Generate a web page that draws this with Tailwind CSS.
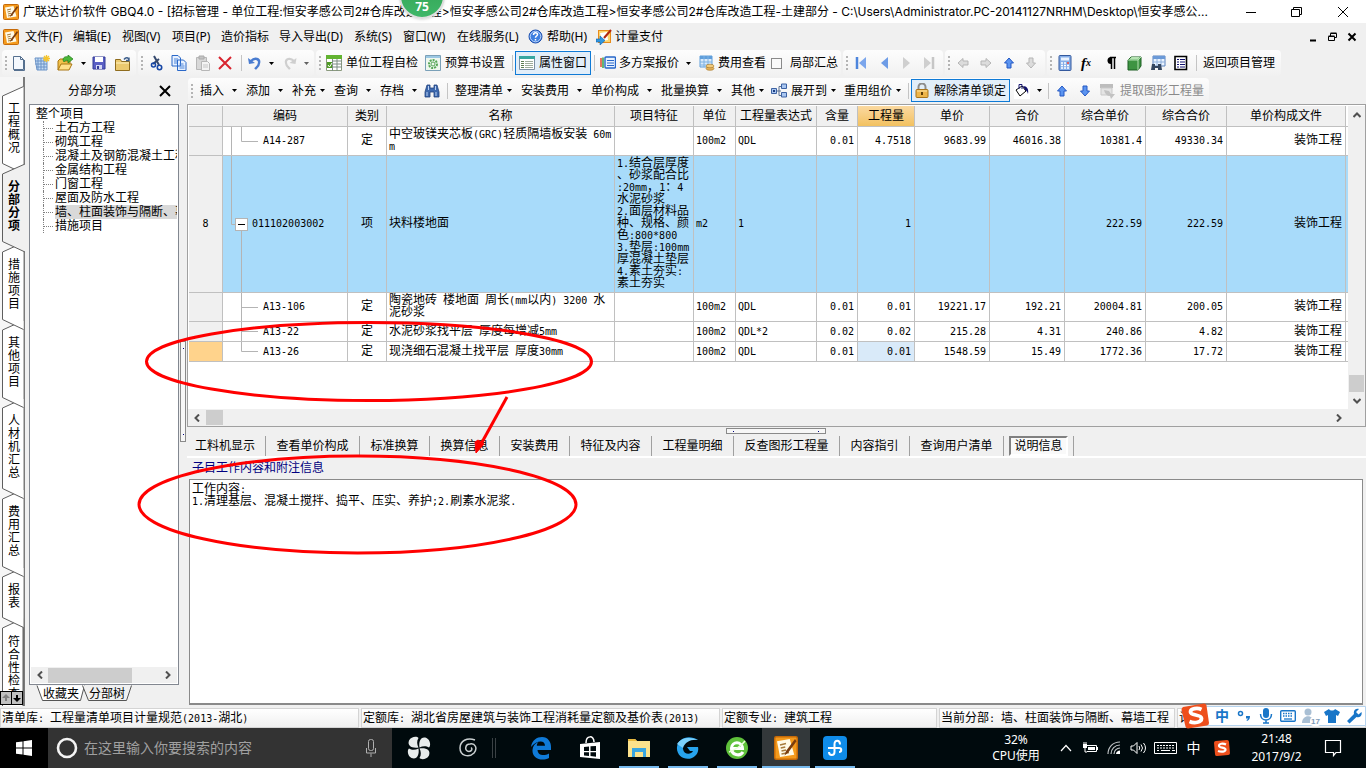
<!DOCTYPE html>
<html lang="zh-CN">
<head>
<meta charset="utf-8">
<title>广联达计价软件 GBQ4.0</title>
<script src="https://cdn.jsdelivr.net/npm/@tailwindcss/browser@4"></script>
</head>
<body class="relative flex h-screen flex-col overflow-hidden bg-[#f0f0f0] font-['Noto_Sans','Noto_Sans_CJK_SC',sans-serif] text-xs leading-4 text-black">

<!-- shared glyphs -->
<svg class="hidden" aria-hidden="true">
  <symbol id="caret" viewBox="0 0 5 3"><path d="M0 0h5L2.500 3z" fill="#000"/></symbol>
  <symbol id="grip" viewBox="0 0 3 16"><path d="M0 1h2v2H0zM0 5h2v2H0zM0 9h2v2H0zM0 13h2v2H0z" fill="#b4b4b4"/></symbol>
  <symbol id="up" viewBox="0 0 10 12"><path d="M5 1L9.500 6H7v5H3V6H.5z" fill="#5b94f0" stroke="#2458c4"/></symbol>
  <symbol id="down" viewBox="0 0 10 12"><path d="M5 11L9.500 6H7V1H3v5H.5z" fill="#5b94f0" stroke="#2458c4"/></symbol>
  <symbol id="app" viewBox="0 0 16 16"><rect x=".5" y=".5" width="15" height="15" rx="1" fill="#f49a1c" stroke="#c66a08"/><path d="M2 3.500l8.500-1.500 3 10.500L4 14z" fill="#fffbe8"/><path d="M4 6l4-1M4.500 8l3-.7M5 10l3-.7M5 12l5-1" stroke="#a77b3c"/><path d="M14 2L8 10l-1 3 2.500-2L15 3.500z" fill="#7b3d0e"/></symbol>
  <symbol id="chev" viewBox="0 0 8 8"><path d="M6 .5L2.500 4 6 7.500" fill="none" stroke="#505050" stroke-width="2"/></symbol>
</svg>

<!-- title bar -->
<header class="flex h-[23px] shrink-0 items-center bg-white pl-[3px]">
  <svg class="size-4 shrink-0"><use href="#app"/></svg>
  <h1 class="ml-1 min-w-0 grow whitespace-pre font-['Inter','Noto_Sans_CJK_SC',sans-serif] text-xs font-normal">广联达计价软件 GBQ4.0 - [招标管理 - 单位工程:恒安孝感公司2#仓库改造工程&gt;恒安孝感公司2#仓库改造工程&gt;恒安孝感公司2#仓库改造工程-土建部分 - C:\Users\Administrator.PC-20141127NRHM\Desktop\恒安孝感公...</h1>
  <button aria-label="最小化" class="flex w-[46px] shrink-0 justify-center"><svg class="h-3 w-3" viewBox="0 0 12 12"><path d="M1 6.500h10" stroke="#000"/></svg></button>
  <button aria-label="还原" class="flex w-[46px] shrink-0 justify-center"><svg class="h-3 w-3" viewBox="0 0 12 12"><path d="M.5 3.500h8v7h-8zM2.500 3.500v-2h8v7h-2" fill="none" stroke="#000"/></svg></button>
  <button aria-label="关闭" class="flex w-[46px] shrink-0 justify-center"><svg class="h-3 w-3" viewBox="0 0 12 12"><path d="M1 1l10 10M11 1L1 11" stroke="#000"/></svg></button>
</header>

<!-- menu bar -->
<nav class="flex h-[27px] shrink-0 items-center whitespace-nowrap pl-[3px]">
  <svg class="size-4 shrink-0"><use href="#app"/></svg>
  <button class="ml-1.5 w-12 text-left">文件(F)</button>
  <button class="w-[49px] text-left">编辑(E)</button>
  <button class="w-[50px] text-left">视图(V)</button>
  <button class="w-[49px] text-left">项目(P)</button>
  <button class="w-[58px] text-left">造价指标</button>
  <button class="w-[75px] text-left">导入导出(D)</button>
  <button class="w-[49px] text-left">系统(S)</button>
  <button class="w-[54px] text-left">窗口(W)</button>
  <button class="w-[71px] text-left">在线服务(L)</button>
  <button class="flex w-[68px] items-center gap-1"><svg class="size-[15px]" viewBox="0 0 15 15"><circle cx="7.500" cy="7.500" r="6.500" fill="#3d7fe0" stroke="#1d4fae"/><circle cx="7.500" cy="7.500" r="5.300" fill="none" stroke="#b9d3fa"/><path d="M5.500 6c0-3 4-3 4-.5 0 1.500-2 1.500-2 3.200M7.500 10v1.500" fill="none" stroke="#fff" stroke-width="1.500"/></svg>帮助(H)</button>
  <button class="flex items-center gap-[3px]"><svg class="size-4" viewBox="0 0 16 16"><rect x="2.500" y="1.500" width="12" height="12" fill="#fbd46e" stroke="#e88b1a"/><path d="M4 4l7-1 1 8-6 1z" fill="#fff"/><path d="M15 1L8 9" stroke="#b2280f" stroke-width="2"/><path d="M0 10h4V7l5 4.500L4 16v-3H0z" fill="#2f96e0" stroke="#0e62ab" stroke-width=".6"/></svg>计量支付</button>
  <div class="grow"></div>
  <button aria-label="最小化文档" class="w-[19px]"><svg class="size-2.5" viewBox="0 0 10 10"><path d="M1 8.500h6" stroke="#000" stroke-width="2"/></svg></button>
  <button aria-label="还原文档" class="w-[19px]"><svg class="size-2.5" viewBox="0 0 10 10"><path d="M.5 4.500h6v4h-6zM2.500 4V1.500h6v4H7M.5 4h6M2.500 1h6" fill="none" stroke="#000"/></svg></button>
  <button aria-label="关闭文档" class="w-[19px]"><svg class="size-2.5" viewBox="0 0 10 10"><path d="M1.500 1.500l7 7M8.500 1.500l-7 7" stroke="#000" stroke-width="2"/></svg></button>
</nav>

<!-- main toolbar -->
<div role="toolbar" class="flex h-[27px] shrink-0 gap-0.5 whitespace-nowrap pb-px pl-0.5 [&>div]:flex [&>div]:shrink-0 [&>div]:items-center [&>div]:rounded-sm [&>div]:bg-linear-to-b [&>div]:from-[#fdfdfd] [&>div]:to-[#f1f1f1] [&_button]:flex [&_button]:shrink-0 [&_button]:items-center [&_svg]:shrink-0">
  <div>
    <span class="w-2.5 pl-[3px]"><svg class="h-4 w-[3px]"><use href="#grip"/></svg></span>
    <button aria-label="新建" class="w-[22px]"><svg class="h-4 w-3.5" viewBox="0 0 14 16"><path d="M1.500 1.500h7l3 3v10h-10z" fill="#f4f8fd" stroke="#56708f"/><path d="M8.500 1.500v3h3M12.500 5v10.500H2" fill="none" stroke="#56708f"/></svg></button>
    <button aria-label="新建项目" class="w-[23px]"><svg class="size-4" viewBox="0 0 16 16"><path d="M1 3h12v12H3z" fill="#c5dcf5" stroke="#6b93c7"/><path d="M4 3v12M7 3v12M10 3v12M1 6h12M1 9h12M2 12h11" stroke="#6b93c7"/><path d="M12.500 0v7M9 3.500h7M10 1l5 5M15 1l-5 5" stroke="#f6c52c" stroke-width="1.300"/></svg></button>
    <button aria-label="打开" class="w-[23px]"><svg class="size-4" viewBox="0 0 16 16"><path d="M1 15V6l2-2h4l1 2h5v3" fill="#f2c14a" stroke="#a97612"/><path d="M1 15l3-6h11l-3 6z" fill="#ffe08a" stroke="#a97612"/><path d="M6 5c0-3 3-4 5-3V0l5 4-5 4V5.500C9 5 8 6 7 7z" fill="#4cb83a" stroke="#1f7d19" stroke-width=".7"/></svg></button>
    <button aria-label="打开列表" class="w-3 pl-px"><svg class="h-[3px] w-[5px]"><use href="#caret"/></svg></button>
    <button aria-label="保存" class="w-[23px]"><svg class="size-3.5" viewBox="0 0 14 14"><path d="M1 1h12v12H1z" fill="#5a5fc4" stroke="#333a97"/><path d="M3 1h8v5H3z" fill="#fff"/><path d="M4 9h6v4H4z" fill="#d5d8f5"/><path d="M5 10h2v3H5z" fill="#333a97"/></svg></button>
    <button aria-label="目录" class="w-[21px]"><svg class="h-[15px] w-4" viewBox="0 0 16 15"><path d="M.5 3.500h5l1 2h8v9H.5z" fill="#ecca6f" stroke="#8f6c1e"/><path d="M9 3.500c2-3 5-2 5 1m0-3v3h-3" fill="none" stroke="#3e5f8c" stroke-width="1.400"/><path d="M1 7h13" stroke="#fff2c0"/></svg></button>
  </div>
  <div>
    <span class="w-3 pl-[3px]"><svg class="h-4 w-[3px]"><use href="#grip"/></svg></span>
    <button aria-label="剪切" class="w-[21px]"><svg class="h-4 w-3.5" viewBox="0 0 14 16"><path d="M4 1l5 9M9 4L3 9" stroke="#35496e" stroke-width="2"/><circle cx="3.500" cy="10" r="2" fill="none" stroke="#1747a6" stroke-width="1.600"/><circle cx="9.500" cy="12.500" r="2.200" fill="none" stroke="#1747a6" stroke-width="1.600"/></svg></button>
    <button aria-label="复制" class="w-6"><svg class="size-4" viewBox="0 0 16 16"><path d="M1 .5h6l2.500 2.500v8H1zM6.500 5h6L15 7.500V15.500H6.500z" fill="#e7f1ff" stroke="#2a68c8"/><path d="M3 4h4M3 6h3M3 8h3M8.500 9h4M8.500 11h5M8.500 13h5" stroke="#4c85d9"/></svg></button>
    <button aria-label="粘贴" class="w-[23px]"><svg class="size-4" viewBox="0 0 16 16"><path d="M1.500 2.500h10v12h-10z" fill="#d8d8d8" stroke="#b7b7b7"/><path d="M4 1h5v3H4z" fill="#c4c4c4" stroke="#aaa"/><path d="M6.500 6.500h6l2 2v7h-8z" fill="#f4f4f4" stroke="#b7b7b7"/><path d="M8 10h5M8 12h5" stroke="#c6c6c6"/></svg></button>
    <button aria-label="删除" class="w-5"><svg class="size-3.5" viewBox="0 0 14 14"><path d="M1 1l12 12M13 1L1 13" stroke="#d8242f" stroke-width="2"/></svg></button>
    <span class="h-4 w-2.5"><i class="ml-[3px] block h-4 w-px bg-[#c4c4c4]"></i></span>
    <button aria-label="撤销" class="w-5"><svg class="size-3.5" viewBox="0 0 14 14"><path d="M3 5c4-4 9-2 8 2 0 3-2 4-4 6" fill="none" stroke="#4a7cd0" stroke-width="2.400"/><path d="M0 2l1 6 6-1z" fill="#4a7cd0"/></svg></button>
    <button aria-label="撤销列表" class="w-[15px] pl-px"><svg class="h-[3px] w-[5px]"><use href="#caret"/></svg></button>
    <button aria-label="重做" class="w-5"><svg class="size-3.5" viewBox="0 0 14 14"><path d="M11 5C7 1 2 3 3 7c0 3 2 4 4 6" fill="none" stroke="#cfcfcf" stroke-width="2.200"/><path d="M13.500 2l-1 6-6-1z" fill="#cfcfcf"/></svg></button>
    <button aria-label="重做列表" class="w-[11px] pl-px opacity-60"><svg class="h-[3px] w-[5px]"><use href="#caret"/></svg></button>
  </div>
  <div>
    <span class="w-2.5 pl-[3px]"><svg class="h-4 w-[3px]"><use href="#grip"/></svg></span>
    <button class="w-[99px] gap-1"><svg class="size-4" viewBox="0 0 16 16"><path d="M.5.5h15v15H.5z" fill="#fff" stroke="#8b9a7e"/><path d="M0 0h16v4H0z" fill="#62b331"/><path d="M7 6h9M7 9h9M7 12h9M6.500 4v12M11 4v12" stroke="#7d8c84"/><path d="M1 7h5v6H1z" fill="#4e9b24"/><path d="M2 10l1.500 2L6 8" fill="none" stroke="#fff"/></svg>单位工程自检</button>
    <button class="w-[84px] gap-1"><svg class="size-4" viewBox="0 0 16 16"><path d="M.5.5h15v15H.5z" fill="#eef7ee" stroke="#7aa0b8"/><path d="M1 1h14v2H1z" fill="#9cc8e4"/><circle cx="8" cy="9" r="4" fill="none" stroke="#55a656" stroke-width="2" stroke-dasharray="2 1"/><circle cx="8" cy="9" r="2" fill="none" stroke="#55a656"/></svg>预算书设置</button>
    <span class="h-4 w-1.5"><i class="ml-[3px] block h-4 w-px bg-[#c4c4c4]"></i></span>
    <button aria-pressed="true" class="h-6 w-[76px] gap-1 border border-[#0f7ad6] bg-[#e2eef9] pl-[3px]"><svg class="size-4" viewBox="0 0 16 16"><path d="M.5 1.500h15v13H.5z" fill="#fff" stroke="#7c8fa3"/><path d="M0 1h16v3H0z" fill="#38a6a0"/><path d="M2 6.500h3M2 8.500h3M2 10.500h3M2 12.500h3" stroke="#5f7c54"/><path d="M6 6.500h8M6 8.500h8M6 10.500h8M6 12.500h8" stroke="#9dab9b"/></svg>属性窗口</button>
    <span class="h-4 w-[9px]"><i class="ml-[3px] block h-4 w-px bg-[#c4c4c4]"></i></span>
    <button class="w-[99px]"><svg class="mr-[3px] size-4" viewBox="0 0 16 16"><path d="M1 3v9" stroke="#e04b2f" stroke-width="1.500"/><path d="M3 2.500v10.500" stroke="#35a048" stroke-width="1.500"/><rect x="5" y="2" width="10.500" height="11" rx="1" fill="#eaf3ff" stroke="#2767c9" stroke-width="1.400"/><path d="M7 5.500h7M7 8h7M7 10.500h7" stroke="#2767c9"/></svg>多方案报价<svg class="ml-[7px] h-[3px] w-[5px]"><use href="#caret"/></svg></button>
    <button class="w-[72px] gap-[3px]"><svg class="size-4" viewBox="0 0 16 16"><path d="M1 1h12v11H1z" fill="#d9eafb" stroke="#5f9edb"/><path d="M1 1h12v3H1z" fill="#5f9edb"/><path d="M5 1v11M9 1v11M1 7h12M1 10h12" stroke="#7db1e3"/><ellipse cx="11" cy="13.500" rx="4" ry="1.800" fill="#e3b15b" stroke="#a6731f" stroke-width=".6"/><ellipse cx="11" cy="11" rx="4" ry="1.800" fill="#f2cb7e" stroke="#a6731f" stroke-width=".6"/></svg>费用查看</button>
    <label class="flex w-[70px] items-center gap-2"><input type="checkbox" class="m-0 size-[11px] appearance-none border border-[#8a8a8a] bg-[#fafafa]">局部汇总</label>
  </div>
  <div>
    <span class="w-3 pl-[3px]"><svg class="h-4 w-[3px]"><use href="#grip"/></svg></span>
    <button aria-label="首项" class="w-[25px]"><svg class="h-3 w-[11px]" viewBox="0 0 11 12"><path d="M2 0v12" stroke="#4d85dc" stroke-width="2.500"/><path d="M11 0v12L4 6z" fill="#7ba6ec"/></svg></button>
    <button aria-label="上一项" class="w-[22px]"><svg class="h-3 w-[11px]" viewBox="0 0 11 12"><path d="M8 0v12L1 6z" fill="#6e9ce6"/></svg></button>
    <button aria-label="下一项" class="w-[22px]"><svg class="h-3 w-[11px]" viewBox="0 0 11 12"><path d="M1 0v12l7-6z" fill="#cfcfcf"/></svg></button>
    <button aria-label="末项" class="w-[19px]"><svg class="h-3 w-[11px]" viewBox="0 0 11 12"><path d="M9 0v12" stroke="#c6c6c6" stroke-width="2.500"/><path d="M0 0v12l7-6z" fill="#cfcfcf"/></svg></button>
  </div>
  <div>
    <span class="w-3 pl-[3px]"><svg class="h-4 w-[3px]"><use href="#grip"/></svg></span>
    <button aria-label="升级" class="w-[23px]"><svg class="h-2.5 w-3" viewBox="0 0 12 10"><path d="M1 5l5-4.500V3h5v4H6v2.500z" fill="#dcdcdc" stroke="#b5b5b5"/></svg></button>
    <button aria-label="降级" class="w-6"><svg class="h-2.5 w-3" viewBox="0 0 12 10"><path d="M11 5L6 .5V3H1v4h5v2.500z" fill="#dcdcdc" stroke="#b5b5b5"/></svg></button>
    <button aria-label="上移" class="w-[22px]"><svg class="h-3 w-2.5"><use href="#up"/></svg></button>
    <button aria-label="下移" class="w-[19px]"><svg class="h-3 w-2.5" viewBox="0 0 10 12"><path d="M5 11L9.500 6H7V1H3v5H.5z" fill="#dcdcdc" stroke="#b5b5b5"/></svg></button>
  </div>
  <div>
    <span class="w-[11px] pl-[3px]"><svg class="h-4 w-[3px]"><use href="#grip"/></svg></span>
    <button aria-label="计算器" class="w-[23px]"><svg class="h-4 w-3.5" viewBox="0 0 14 16"><rect x="1" y=".5" width="12" height="15" rx="1" fill="#86aee8" stroke="#34599d"/><path d="M3 2.500h8v3H3z" fill="#eaf3ff"/><path d="M3 8h8M3 10.500h8M3 13h8" stroke="#fff" stroke-width="1.500" stroke-dasharray="2 1"/><path d="M9 8h2" stroke="#d33" stroke-width="1.500"/></svg></button>
    <button aria-label="函数" class="w-6 font-['Liberation_Serif'] text-[15px] font-bold italic">f<span class="text-[10px]">x</span></button>
    <button aria-label="段落" class="w-[22px]"><svg class="h-3.5 w-3" viewBox="0 0 12 14"><path d="M5 1.500h6M6.500 1v12M9.500 1v12" stroke="#000" stroke-width="1.500"/><path d="M6 1a3.500 3.500 0 000 7z" fill="#000"/></svg></button>
    <button aria-label="模型" class="w-[23px]"><svg class="size-[15px]" viewBox="0 0 15 15"><path d="M1 4l3-3h10v9l-3 4H1z" fill="#3d9442" stroke="#1c5e22"/><path d="M1 4h10v10M11 4l3-3" fill="none" stroke="#b6e3b3"/><path d="M2 3.500L4.500 1H13l-2 2.500z" fill="#b6e3b3"/></svg></button>
    <button aria-label="查找表" class="w-6"><svg class="size-4" viewBox="0 0 16 16"><path d="M3 1h12v10H3z" fill="#e9f3ff" stroke="#5a82bd"/><path d="M3 1h12v3H3z" fill="#6b9ad8"/><path d="M7 4v6M11 4v6M3 7h12" stroke="#8fb0dc"/><path d="M2 9h3v2h3V9h3l1 6H8v-2H5v2H1z" fill="#34465f"/></svg></button>
    <button aria-label="列表" class="w-[18px]"><svg class="h-4 w-3.5" viewBox="0 0 14 16"><path d="M1 1.500h11.500v13H1z" fill="#fff" stroke="#000" stroke-width="1.600"/><path d="M3 4.500h2M3 7h2M3 9.500h2M3 12h2M6 4.500h5M6 7h5M6 9.500h5M6 12h5" stroke="#10106f" stroke-width="1.200"/></svg></button>
    <span class="h-4 w-[11px]"><i class="ml-1 block h-4 w-px bg-[#c4c4c4]"></i></span>
    <button class="w-[78px]">返回项目管理</button>
  </div>
</div>

<!-- workspace -->
<main class="flex min-h-0 grow">

  <!-- vertical page tabs -->
  <nav class="relative w-[25px] shrink-0 overflow-hidden bg-[#f6f6f6]">
    <svg class="absolute left-0 top-0 h-[629px] w-[25px]" viewBox="0 0 25 629">
      <path d="M24 0v87M24 174v455" stroke="#7a7a7a" stroke-width="2"/>
      <g fill="#fff" stroke="#5e5e5e">
        <path d="M23 629V541.500L2.500 551v78"/>
        <path d="M23.500 490.500L2.500 500v40.500l21 10"/>
        <path d="M23.500 412.500L2.500 422v67.500l21 10"/>
        <path d="M23.500 321.500L2.500 331v80.500l21 10"/>
        <path d="M23.500 243.500L2.500 253v67.500l21 10"/>
        <path d="M23.500 165.500L2.500 175v67.500l21 10"/>
        <path d="M23.500 9.500L2.500 19v67.500l21 10"/>
      </g>
      <path d="M25 87L2.500 97v67.500L25 175" fill="#f0f0f0" stroke="#5e5e5e"/>
    </svg>
    <div class="relative flex flex-col gap-[26px] pl-[7px] pt-[25px] leading-[13px] [&>button]:w-3.5 [&>button]:wrap-anywhere">
      <button>工程概况</button>
      <button class="font-bold">分部分项</button>
      <button>措施项目</button>
      <button>其他项目</button>
      <button>人材机汇总</button>
      <button>费用汇总</button>
      <button>报表</button>
      <button>符合性检查</button>
    </div>
    <div class="absolute bottom-px left-0 flex h-3.5 w-[23px] border border-black">
      <button aria-label="上滚" class="flex w-2.5 items-center justify-center bg-[#c0c0c0]"><svg class="size-2" viewBox="0 0 8 8"><path d="M4 0l4 4H5v3H3V4H0z" fill="#808080"/></svg></button>
      <button aria-label="下滚" class="flex grow items-center justify-center border-l border-black bg-[#c0c0c0]"><svg class="size-2" viewBox="0 0 8 8"><path d="M4 8l4-4H5V1H3v3H0z" fill="#000"/></svg></button>
    </div>
  </nav>

  <!-- section tree -->
  <aside class="ml-1 flex w-[150px] shrink-0 flex-col">
    <div class="flex h-[27px] items-center pl-[39px]">
      <h2 class="w-[91px] text-xs font-normal">分部分项</h2>
      <button aria-label="关闭面板"><svg class="size-3" viewBox="0 0 12 12"><path d="M1 1l10 10M11 1L1 11" stroke="#000" stroke-width="2"/></svg></button>
    </div>
    <div class="flex min-h-0 grow flex-col border border-[#828790] bg-white p-px">
      <div class="grow overflow-hidden whitespace-nowrap pl-[5px] pt-px leading-[14px]">
        <div>整个项目</div>
        <ul class="ml-[7px] [&>li]:flex [&>li]:h-3.5 [&>li]:items-center [&_i]:mr-0.5 [&_i]:h-px [&_i]:w-[9px] [&_i]:border-t [&_i]:border-dotted [&_i]:border-[#808080] [&>li]:border-l [&>li]:border-dotted [&>li]:border-[#808080] [&_i]:shrink-0">
          <li><i></i>土石方工程</li>
          <li><i></i>砌筑工程</li>
          <li><i></i>混凝土及钢筋混凝土工程</li>
          <li><i></i>金属结构工程</li>
          <li><i></i>门窗工程</li>
          <li><i></i>屋面及防水工程</li>
          <li><i></i><span class="bg-[#d9d9d9]">墙、柱面装饰与隔断、幕墙工程</span></li>
          <li><i></i>措施项目</li>
        </ul>
      </div>
      <div class="flex h-4 shrink-0 items-center bg-[#f0f0f0]">
        <button aria-label="向左" class="flex w-[17px] justify-center"><svg class="size-2"><use href="#chev"/></svg></button>
        <div class="h-[15px] w-[84px] bg-[#cdcdcd]"></div>
        <div class="grow"></div>
        <button aria-label="向右" class="flex w-[17px] rotate-180 justify-center"><svg class="size-2"><use href="#chev"/></svg></button>
      </div>
    </div>
    <div class="relative h-[21px] shrink-0">
      <svg class="absolute left-0 top-0 h-5 w-[110px]" viewBox="0 0 110 20"><path d="M8 .5l5.500 15h38l4-15" fill="#fff" stroke="#555"/><path d="M53.500.5l6 15h38l5-15" fill="#f0f0f0" stroke="#555"/></svg>
      <div class="relative flex gap-2.5 pl-3.5 pt-px"><button>收藏夹</button><button>分部树</button></div>
    </div>
  </aside>

  <!-- vertical splitter -->
  <div class="flex w-2 shrink-0 items-end pb-[264px] pl-px"><div class="flex h-[101px] w-[6px] flex-col justify-between border border-[#8a8a8a] bg-[#f7f7f7] py-1.5 pl-0.5"><i class="size-px bg-[#000080]"></i><i class="size-px bg-[#000080]"></i></div></div>

  <section class="flex min-w-0 grow flex-col">
    <!-- editing toolbar -->
    <div role="toolbar" class="flex h-[27px] shrink-0 whitespace-nowrap pb-px pl-px pt-px">
     <div class="flex shrink-0 items-center rounded-sm bg-linear-to-b from-[#fdfdfd] to-[#f1f1f1] [&_svg]:shrink-0 [&>button]:flex [&>button]:shrink-0 [&>button]:items-center">
      <span class="w-3 pl-[3px]"><svg class="h-4 w-[3px]"><use href="#grip"/></svg></span>
      <button class="w-[46px] gap-2">插入<svg class="h-[3px] w-[5px]"><use href="#caret"/></svg></button>
      <button class="w-[46px] gap-2">添加<svg class="h-[3px] w-[5px]"><use href="#caret"/></svg></button>
      <button class="w-[42px] gap-1">补充<svg class="h-[3px] w-[5px]"><use href="#caret"/></svg></button>
      <button class="w-[46px] gap-2">查询<svg class="h-[3px] w-[5px]"><use href="#caret"/></svg></button>
      <button class="w-11 gap-2">存档<svg class="h-[3px] w-[5px]"><use href="#caret"/></svg></button>
      <button aria-label="查找" class="w-5"><svg class="h-3.5 w-4" viewBox="0 0 16 14"><path d="M3 1h3v3h4V1h3l2 7v5h-5V8H6v5H1V8z" fill="#3d68ad" stroke="#22437e" stroke-width=".8"/><path d="M3 8v4M12 8v4M4.500 2v4M11.500 2v4" stroke="#b9d0f3"/></svg></button>
      <span class="h-4 w-[11px]"><i class="ml-[3px] block h-4 w-px bg-[#c4c4c4]"></i></span>
      <button class="w-[66px] gap-1">整理清单<svg class="h-[3px] w-[5px]"><use href="#caret"/></svg></button>
      <button class="w-[70px] gap-2">安装费用<svg class="h-[3px] w-[5px]"><use href="#caret"/></svg></button>
      <button class="w-[70px] gap-2">单价构成<svg class="h-[3px] w-[5px]"><use href="#caret"/></svg></button>
      <button class="w-[70px] gap-2">批量换算<svg class="h-[3px] w-[5px]"><use href="#caret"/></svg></button>
      <button class="w-10 gap-1">其他<svg class="h-[3px] w-[5px]"><use href="#caret"/></svg></button>
      <button class="w-[73px] gap-1"><svg class="h-4 w-4" viewBox="0 0 16 16"><path d="M6 8h4M8 3.500v9M8 3.500h2M8 12.500h2" fill="none" stroke="#5c7191"/><path d="M.5 5.500h5v5h-5zM10.500 1h5v4.500h-5zM10.500 9.500h5V14h-5z" fill="#a9c6f0" stroke="#3d62a3"/><path d="M2 7l2 2M4 7L2 9" stroke="#1d3f82"/></svg>展开到<svg class="h-[3px] w-[5px]"><use href="#caret"/></svg></button>
      <button class="w-[60px] gap-1">重用组价<svg class="h-[3px] w-[5px]"><use href="#caret"/></svg></button>
      <span class="h-4 w-[7px]"><i class="ml-1 block h-4 w-px bg-[#c4c4c4]"></i></span>
      <button aria-pressed="true" class="h-[23px] w-[99px] gap-[5px] border border-[#0f7ad6] bg-[#e2eef9] pl-[3px]"><svg class="h-[15px] w-3.5" viewBox="0 0 14 15"><path d="M3.500 7V4a3.500 3.500 0 017 0v3" fill="none" stroke="#8d8d8d" stroke-width="2"/><rect x="1" y="6.500" width="12" height="8" rx="1" fill="#edb54a" stroke="#a8741b"/><path d="M2 8h10" stroke="#fbe3a4"/><path d="M7 9v3" stroke="#5e3e08" stroke-width="2"/></svg>解除清单锁定</button>
      <button aria-label="填充色" class="ml-1 w-[31px] gap-[7px]"><svg class="size-4" viewBox="0 0 16 16"><path d="M0 0h16v16H0z" fill="#fff"/><path d="M2 7l6-4 4 5-6 5z" fill="#fff" stroke="#000"/><path d="M5 6V1.500h3V6" fill="none" stroke="#1a1a75"/><path d="M9 3c4 0 6 3 5 8-1-3-2-4-3-4z" fill="#14146e"/></svg><svg class="h-[3px] w-[5px]"><use href="#caret"/></svg></button>
      <span class="h-4 w-3"><i class="ml-[3px] block h-4 w-px bg-[#c4c4c4]"></i></span>
      <button aria-label="上移行" class="w-[23px]"><svg class="h-3 w-2.5"><use href="#up"/></svg></button>
      <button aria-label="下移行" class="w-5"><svg class="h-3 w-2.5"><use href="#down"/></svg></button>
      <button disabled class="w-[109px] gap-1 text-[#8a8a8a]"><svg class="size-4" viewBox="0 0 16 16"><path d="M0 1h13v4H0z" fill="#bdbdbd"/><path d="M1 5h11v7H1z" fill="#e4e4e4" stroke="#c9c9c9"/><path d="M4 7l5 1 2 3h4l-4 5-1-3c-3 0-5-2-6-6z" fill="#c2c2c2"/></svg>提取图形工程量</button>
     </div>
    </div>

    <!-- bill grid -->
    <div class="flex h-[323px] shrink-0 flex-col border border-[#a0a0a0] bg-white pt-px">
      <div class="flex min-h-0 grow">
        <div class="min-w-0 grow overflow-hidden pl-px">
          <table class="w-full table-fixed border-separate border-spacing-0 leading-3 [&_td]:whitespace-nowrap [&_td]:border-b [&_td]:border-r [&_td]:border-[#c0c0c0] [&_td]:px-0.5 [&_td]:py-0 [&_td]:align-middle [&_th]:border-b [&_th]:border-r [&_th]:border-[#c0c0c0] [&_th]:bg-[#f0f0f0] [&_th]:p-0 [&_th]:font-normal">
            <colgroup><col class="w-[34px]"><col class="w-[125px]"><col class="w-[39px]"><col><col class="w-[79px]"><col class="w-[42px]"><col class="w-[81px]"><col class="w-[41px]"><col class="w-[57px]"><col class="w-[75px]"><col class="w-[75px]"><col class="w-[81px]"><col class="w-[81px]"><col class="w-[119px]"><col class="w-[2px]"></colgroup>
            <thead>
              <tr class="h-[21px]"><th></th><th>编码</th><th>类别</th><th>名称</th><th>项目特征</th><th>单位</th><th>工程量表达式</th><th>含量</th><th class="bg-linear-to-b from-[#fbd9a0] to-[#f2c15f]">工程量</th><th>单价</th><th>合价</th><th>综合单价</th><th>综合合价</th><th>单价构成文件</th><td class="border-r-0! p-0!"></td></tr>
            </thead>
            <tbody class="font-['DejaVu_Sans_Mono','Noto_Sans_CJK_SC',monospace] text-[10px] [&_b]:font-['Noto_Sans_CJK_SC'] [&_b]:text-xs [&_b]:font-normal [&_b]:leading-[0] [&_td:nth-child(1)]:bg-[#f0f0f0] [&_td:nth-child(1)]:text-center [&_td:nth-child(2)]:p-0 [&_td:nth-child(3)]:text-center [&_td:nth-child(n+8)]:pr-[3px] [&_td:nth-child(n+8)]:text-right [&_td:nth-child(15)]:border-r-0 [&_td:nth-child(15)]:p-0">
              <tr class="h-[29px]"><td></td><td><div class="flex items-center"><svg class="mr-1 h-7 w-9 shrink-0" viewBox="0 0 36 28"><path d="M8.500 0v28M18.500 0v14.500H35" fill="none" stroke="#b4b4b4"/></svg>A14-287</div></td><td><b>定</b></td><td><b>中空玻镁夹芯板</b>(GRC)<b>轻质隔墙板安装</b> 60m<br>m</td><td></td><td>100m2</td><td>QDL</td><td>0.01</td><td>4.7518</td><td>9683.99</td><td>46016.38</td><td>10381.4</td><td>49330.34</td><td><b>装饰工程</b></td><td></td></tr>
              <tr class="h-[137px] bg-[#a8dbfa]"><td>8</td><td><div class="flex items-center"><svg class="mr-1 h-[136px] w-[25px] shrink-0" viewBox="0 0 25 136"><path d="M8.500 0v68.500H13M18.500 74v62" fill="none" stroke="#b4b4b4"/><rect x="12.500" y="62.500" width="12" height="12" fill="#fff" stroke="#b4b4b4"/><path d="M15 68.500h7" stroke="#000"/></svg>011102003002</div></td><td><b>项</b></td><td><b>块料楼地面</b></td><td>1.<b>结合层厚度</b><br><b>、砂浆配合比</b><br>:20mm<b>，</b>1<b>：</b>4<br><b>水泥砂浆</b><br>2.<b>面层材料品</b><br><b>种、规格、颜</b><br><b>色</b>:800*800<br>3.<b>垫层</b>:100mm<br><b>厚混凝土垫层</b><br>4.<b>素土夯实</b>:<br><b>素土夯实</b></td><td>m2</td><td>1</td><td></td><td>1</td><td></td><td></td><td>222.59</td><td>222.59</td><td><b>装饰工程</b></td><td></td></tr>
              <tr class="h-[29px]"><td></td><td><div class="flex items-center"><svg class="mr-1 h-7 w-9 shrink-0" viewBox="0 0 36 28"><path d="M18.500 0v28M18.500 14.500H35" fill="none" stroke="#b4b4b4"/></svg>A13-106</div></td><td><b>定</b></td><td><b>陶瓷地砖</b> <b>楼地面</b> <b>周长</b>(mm<b>以内</b>) 3200 <b>水</b><br><b>泥砂浆</b></td><td></td><td>100m2</td><td>QDL</td><td>0.01</td><td>0.01</td><td>19221.17</td><td>192.21</td><td>20004.81</td><td>200.05</td><td><b>装饰工程</b></td><td></td></tr>
              <tr class="h-5"><td></td><td><div class="flex items-center"><svg class="mr-1 h-[19px] w-9 shrink-0" viewBox="0 0 36 19"><path d="M18.500 0v19M18.500 9.500H35" fill="none" stroke="#b4b4b4"/></svg>A13-22</div></td><td><b>定</b></td><td><b>水泥砂浆找平层</b> <b>厚度每增减</b>5mm</td><td></td><td>100m2</td><td>QDL*2</td><td>0.02</td><td>0.02</td><td>215.28</td><td>4.31</td><td>240.86</td><td>4.82</td><td><b>装饰工程</b></td><td></td></tr>
              <tr class="h-5"><td class="bg-[#ffd38c]!"></td><td><div class="flex items-center"><svg class="mr-1 h-[19px] w-9 shrink-0" viewBox="0 0 36 19"><path d="M18.500 0v9.500H35" fill="none" stroke="#b4b4b4"/></svg>A13-26</div></td><td><b>定</b></td><td><b>现浇细石混凝土找平层</b> <b>厚度</b>30mm</td><td></td><td>100m2</td><td>QDL</td><td>0.01</td><td class="bg-[#d9eaf9]">0.01</td><td>1548.59</td><td>15.49</td><td>1772.36</td><td>17.72</td><td><b>装饰工程</b></td><td></td></tr>
            </tbody>
          </table>
        </div>
        <div class="flex w-[17px] shrink-0 flex-col items-center bg-[#f0f0f0]">
          <button aria-label="向上" class="flex h-[17px] items-center"><svg class="size-2 rotate-90"><use href="#chev"/></svg></button>
          <div class="grow"></div>
          <div class="h-[17px] w-[15px] bg-[#cdcdcd]"></div>
          <button aria-label="向下" class="flex h-[17px] items-center"><svg class="size-2 -rotate-90"><use href="#chev"/></svg></button>
        </div>
      </div>
      <div class="flex h-[17px] shrink-0 items-center bg-[#f0f0f0] pr-[17px]">
        <button aria-label="向左滚动" class="flex w-[18px] justify-center"><svg class="size-2"><use href="#chev"/></svg></button>
        <div class="h-[15px] w-[17px] bg-[#cdcdcd]"></div>
        <div class="grow"></div>
        <button aria-label="向右滚动" class="flex w-[17px] rotate-180 justify-center"><svg class="size-2"><use href="#chev"/></svg></button>
      </div>
    </div>

    <!-- detail tabs -->
    <div class="relative flex h-[31px] shrink-0 items-center border-b-2 border-white whitespace-nowrap pt-[9px] [&>button]:h-5 [&>button]:shrink-0 [&>button]:border-r [&>button]:border-[#a0a0a0]">
      <div class="absolute left-[539px] top-[1px] flex h-1.5 w-[100px] items-center justify-between border border-[#8a8a8a] bg-[#f7f7f7] px-1.5"><i class="size-px bg-[#000080]"></i><i class="size-px bg-[#000080]"></i></div>
      <button class="w-[79px] pr-0.5">工料机显示</button>
      <button class="w-[94px]">查看单价构成</button>
      <button class="w-[70px]">标准换算</button>
      <button class="w-[70px]">换算信息</button>
      <button class="w-[70px]">安装费用</button>
      <button class="w-[82px]">特征及内容</button>
      <button class="w-[82px]">工程量明细</button>
      <button class="w-[106px]">反查图形工程量</button>
      <button class="w-[70px]">内容指引</button>
      <button class="w-[94px]">查询用户清单</button>
      <div class="flex h-5 w-[70px] shrink-0 justify-center border-r border-[#a0a0a0]"><button class="w-[59px] border-2 border-b-white border-l-[#808080] border-r-white border-t-[#808080] bg-[#f9f9f9]">说明信息</button></div>
    </div>

    <!-- notes -->
    <div class="flex min-h-0 grow flex-col pb-px pl-0.5 pr-[3px]">
      <h2 class="h-[21px] shrink-0 pl-[3px] pt-0.5 text-xs font-normal text-[#000080]">子目工作内容和附注信息</h2>
      <div class="grow border-b-2 border-l border-r border-t border-[#8a8a8a] bg-white px-0.5 pt-1 font-['DejaVu_Sans_Mono','Noto_Sans_CJK_SC',monospace] text-[10px] leading-3 [&_b]:text-xs [&_b]:font-normal [&_b]:leading-[0]">
        <p><b>工作内容</b>:</p>
        <p>1.<b>清理基层、混凝土搅拌、捣平、压实、养护</b>;2.<b>刷素水泥浆</b>.</p>
      </div>
    </div>
  </section>
</main>

<!-- status bar -->
<footer class="flex h-[22px] shrink-0 items-stretch gap-0.5 whitespace-pre pt-0.5 font-['DejaVu_Sans_Mono','Noto_Sans_CJK_SC',monospace] text-[10px] leading-5 [&_b]:text-xs [&_b]:font-normal [&_b]:leading-[0] [&>div]:overflow-hidden [&>div]:border [&>div]:border-[#d4d4d4] [&>div]:bg-linear-to-b [&>div]:from-white [&>div]:to-[#f0f0f0] [&>div]:pl-px">
  <div class="w-[359px]"><b>清单库</b>: <b>工程量清单项目计量规范</b>(2013-<b>湖北</b>)</div>
  <div class="w-[359px]"><b>定额库</b>: <b>湖北省房屋建筑与装饰工程消耗量定额及基价表</b>(2013)</div>
  <div class="w-[215px]"><b>定额专业</b>: <b>建筑工程</b></div>
  <div class="w-[236px]"><b>当前分部</b>: <b>墙、柱面装饰与隔断、幕墙工程</b></div>
  <div class="grow"><b>计</b></div>
</footer>

<!-- input method bar -->
<div class="absolute bottom-[38px] right-0 flex h-[28px] w-[186px] items-center">
  <div class="absolute inset-x-0 bottom-1 left-4 top-1 rounded-l border border-[#b5d3ee] bg-white"></div>
  <svg class="relative h-7 w-[30px] shrink-0" viewBox="0 0 30 28"><path d="M3 5L24 1.500q2 0 2.500 2L29 21q0 2-2 2.500L8 26.500q-2 0-2.500-2L1.500 8q0-2 1.500-3z" fill="#ee4f1c"/><path d="M21.500 7.500c-4-2-11-1-11 2.500 0 4 11 2 11 6.500 0 4-7 5-12 3" fill="none" stroke="#fff" stroke-width="3.800"/></svg>
  <div class="relative flex grow items-center pl-px text-[#1976c8] [&>button]:flex [&>button]:h-5 [&>button]:w-[22px] [&>button]:items-center [&>button]:justify-center">
    <button class="text-sm font-bold leading-5">中</button>
    <button aria-label="标点"><svg class="size-4" viewBox="0 0 16 16"><circle cx="4.500" cy="5.500" r="2" fill="none" stroke="#1976c8" stroke-width="1.500"/><path d="M10 8h4c0 3-1 4-3 5l-.5-1c1-.5 1.500-1 1.500-1.500h-2z" fill="#1976c8"/></svg></button>
    <button aria-label="语音"><svg class="size-4" viewBox="0 0 16 16"><rect x="5" y="0" width="6" height="10" rx="3" fill="#1976c8"/><path d="M2.500 6c0 8 11 8 11 0M8 12v3M5 15h6" fill="none" stroke="#1976c8" stroke-width="1.500"/></svg></button>
    <button aria-label="软键盘"><svg class="size-4" viewBox="0 0 16 16"><rect x=".7" y="2.700" width="14.600" height="10.600" rx="1" fill="none" stroke="#1976c8" stroke-width="1.400"/><path d="M3 5.500h10M3 8h10" stroke="#1976c8" stroke-width="1.300" stroke-dasharray="1.500 1"/><path d="M4 11h8" stroke="#1976c8" stroke-width="1.300"/></svg></button>
    <button aria-label="账号" class="relative font-['Liberation_Sans'] text-[8px] font-bold text-[#7d9bb8]"><svg class="size-4" viewBox="0 0 16 16"><circle cx="6" cy="4" r="3.500" fill="#a9bfd4"/><path d="M0 15c0-9 12-9 12 0z" fill="#a9bfd4"/></svg><span class="absolute bottom-0 right-0 rounded bg-white px-px leading-[9px]">17</span></button>
    <button aria-label="皮肤"><svg class="size-4" viewBox="0 0 16 16"><path d="M5 1c1 2 5 2 6 0l5 3-2 4-2-1v8H4V7L2 8 0 4z" fill="#1976c8"/></svg></button>
    <button aria-label="工具"><svg class="size-4" viewBox="0 0 16 16"><path d="M1 13l7-7c-1-4 2-6 5-5l-3 3 2.500 2.500L15.500 4c1 4-2 6-5 5l-7 6.500z" fill="#1976c8"/></svg></button>
  </div>
</div>

<!-- taskbar -->
<div class="flex h-10 shrink-0 bg-[#000a0d] text-white [&_button]:flex [&_button]:shrink-0 [&_button]:items-center [&_button]:justify-center">
  <button aria-label="开始" class="w-12 bg-black"><svg class="size-4" viewBox="0 0 16 16"><path d="M0 2.300L6.500 1.400v6H0zM7.500 1.200L16 0v7.500H7.500zM0 8.500h6.500v6L0 13.700zM7.500 8.500H16V16l-8.500-1.200z" fill="#fff"/></svg></button>
  <label class="flex w-[344px] shrink-0 items-center bg-[#333]">
    <svg class="ml-[7px] h-6 w-6 shrink-0" viewBox="0 0 24 24"><circle cx="12" cy="12" r="9" fill="none" stroke="#f4f4f4" stroke-width="2.600"/></svg>
    <input type="text" aria-label="搜索" placeholder="在这里输入你要搜索的内容" class="ml-[5px] min-w-0 grow bg-transparent text-sm outline-none placeholder:text-[#a0a0a0]">
    <svg class="mr-3.5 h-5 w-3.5 shrink-0" viewBox="0 0 14 20"><rect x="4.500" y="1.500" width="5" height="11" rx="2" fill="none" stroke="#b0b0b0"/><path d="M2.500 10v5h9v-5M7 15.500V19" fill="none" stroke="#b0b0b0"/></svg>
  </label>
  <button aria-label="四叶" class="ml-0.5 w-[49px]"><svg class="size-6" viewBox="0 0 24 24" fill="#e8ecec"><path id="leaf" d="M11.500 11.500C5 12.500 0 10 2 4.500 4 .5 10 0 11.500 2 9.500 5 10 8.500 11.500 11.500z"/><use href="#leaf" transform="rotate(90 12 12)"/><use href="#leaf" transform="rotate(180 12 12)"/><use href="#leaf" transform="rotate(270 12 12)"/></svg></button>
  <button aria-label="漩涡" class="w-[49px]"><svg class="size-5" viewBox="0 0 20 20"><path d="M17 2C9-1 2 3 2 10c0 8 9 10 14 5 4-5 1-10-4-9-5 0-6 7-1 7.500 3 0 3.500-3 2-4" fill="none" stroke="#c9cfd0" stroke-width="1.500"/></svg></button>
  <span class="flex w-[20px] items-center"><svg class="h-5 w-1" viewBox="0 0 4 20"><path d="M.5 0v20M3.500 0v20" stroke="#3a4144"/></svg></span>
  <button aria-label="Edge" class="ml-[5px] w-12"><svg class="h-6 w-6" viewBox="0 0 24 24"><path d="M2 11C3 4 8 1 13 1c6 0 9 5 9 10v3H8.500c.5 6 7 6 11.500 3.500v4.500c-8 4-17 0-16.500-8 .2-4 2.500-6.500 6-8-1 1-1.500 2-1.700 3.800H16C16 4 8 4 2 11z" fill="#0f7ad8"/></svg></button>
  <button aria-label="商店" class="w-[49px]"><svg class="h-6 w-6" viewBox="0 0 24 24"><path d="M2 8l20-2v17L2 21z" fill="#fff"/><path d="M8 7c0-8 8-8 8-1" fill="none" stroke="#fff" stroke-width="1.500"/><path d="M6 11l5-.5v4.500H6zM12.500 10.300L18 10v5h-5.500zM6 16.200h5V20l-5-.5zM12.500 16.200H18v4.500l-5.500-.6z" fill="#000a0d"/></svg></button>
  <button aria-label="文件管理器" class="ml-[5px] w-10 border-b-2 border-[#76b9ed]"><svg class="mt-0.5 h-5 w-[22px]" viewBox="0 0 22 20"><path d="M0 1h7l2 2h13v16H0z" fill="#fce28c"/><path d="M0 1h7l2 2H0z" fill="#e8b93f"/><path d="M4 10h14v9h-3v-5H7v5H4z" fill="#3aa6e0"/></svg></button>
  <button aria-label="浏览器" class="ml-[9px] w-10 border-b-2 border-[#76b9ed]"><svg class="mt-0.5 size-6" viewBox="0 0 24 24"><path d="M22 4C13-2 2 2 1 11c-1 9 8 14 15 11 5-2 7-7 6-11H11l3 4h3c-2 4-9 4-10-2-1-7 7-11 15-9z" fill="#27a4ee"/><path d="M1 8c5-7 13-7 21-4-7-1-13 2-15 8z" fill="#7bd0fb"/></svg></button>
  <button aria-label="360浏览器" class="ml-[9px] w-10 border-b-2 border-[#76b9ed]"><svg class="mt-0.5 size-6" viewBox="0 0 24 24"><circle cx="12" cy="12" r="11" fill="#5fc13b"/><path d="M18 16c-3 5-12 3-11.500-4C7 5 17 5 17.500 12.500H7" fill="none" stroke="#fff" stroke-width="3"/><path d="M4 16C10 14 17 9 20 5" fill="none" stroke="#e9ffd8" stroke-width="1.500"/></svg></button>
  <button aria-label="计价软件" aria-current="true" class="ml-[5px] w-12 border-b-2 border-[#76b9ed] bg-[#33383a]"><svg class="mt-0.5 size-6"><use href="#app"/></svg></button>
  <button aria-label="同步" class="ml-[5px] w-10 border-b-2 border-[#76b9ed]"><svg class="mt-0.5 size-6" viewBox="0 0 24 24"><rect width="24" height="24" rx="4" fill="#0f8ce9"/><path d="M17 8.500c0-5-5.500-5-5.500-.5v8c0 4-5.500 4-5.500 0M5 12h11c3 0 3 4 0 4" fill="none" stroke="#fff" stroke-width="2"/></svg></button>
  <div class="grow"></div>
  <div class="flex w-[78px] shrink-0 flex-col items-center justify-center">
    <span>32%</span><span>CPU使用</span>
  </div>
  <button aria-label="更多图标" class="w-[22px]"><svg class="h-2 w-3" viewBox="0 0 12 8"><path d="M1 7l5-5.500L11 7" fill="none" stroke="#fff" stroke-width="1.200"/></svg></button>
  <button aria-label="电池" class="w-[25px]"><svg class="h-4 w-4" viewBox="0 0 16 16"><path d="M5 5.500h9.500v6H5M15.500 7v3" fill="none" stroke="#fff"/><path d="M6 7h7v3H6zM1 4h4v4H1z" fill="#fff"/><path d="M2 2v2M4 2v2M3 8v4h2" fill="none" stroke="#fff"/></svg></button>
  <button aria-label="网络" class="w-6"><svg class="h-4 w-4" viewBox="0 0 16 16"><path d="M2 14C2 7 7 2 14 2M5 14c0-5 4-9 9-9M8 14c0-3.500 3-6 6-6" fill="none" stroke="#bfc4c6" stroke-width="1.200"/><path d="M10 14c0-2 2-3.500 4-3.500V14z" fill="#fff"/></svg></button>
  <button aria-label="音量" class="w-[25px]"><svg class="h-4 w-[18px]" viewBox="0 0 18 16"><path d="M1 6h2.500L7 2.500v11L3.500 10H1z" fill="none" stroke="#fff"/><path d="M9 6q1.500 2 0 4M11 4.500q3 3.500 0 7M13.500 3q4 5 0 10" fill="none" stroke="#fff"/></svg></button>
  <button aria-label="触摸键盘" class="w-[29px]"><svg class="h-4 w-6" viewBox="0 0 24 16"><path d="M.5 2.500h22v11H.5z" fill="none" stroke="#fff"/><path d="M3 5.500h18M3 8h18" stroke="#fff" stroke-dasharray="2 1"/><path d="M3 10.500h2M7 10.500h9M18 10.500h3" stroke="#fff"/></svg></button>
  <button class="w-[27px] text-sm">中</button>
  <button aria-label="搜狗输入法" class="w-[30px]"><svg class="size-4" viewBox="0 0 16 16"><rect width="15" height="15" x=".5" y=".5" rx="2" fill="#ee4f1c" transform="rotate(-5 8 8)"/><path d="M12 4.500c-3-1.500-7-1-7 1.200 0 2.500 6.500 1.300 6.500 3.800 0 2.300-4 2.800-7.500 1.500" fill="none" stroke="#fff" stroke-width="2.200"/></svg></button>
  <div class="flex w-[79px] shrink-0 flex-col items-center justify-center leading-[18px]"><span>21:48</span><span>2017/9/2</span></div>
  <button aria-label="通知" class="mr-[17px] w-[33px]"><svg class="h-5 w-[18px]" viewBox="0 0 18 20"><path d="M1.500 2.500h15v12H12L9.500 17.500V14.500h-8z" fill="none" stroke="#fff" stroke-width="1.200"/></svg></button>
</div>

<!-- floating memory meter -->
<div class="absolute -top-[27px] left-[399px] flex size-[46px] items-end justify-center rounded-full border-2 border-[#dedede] bg-linear-to-b from-[#2f9e50] to-[#3fb768] pb-0.5 text-xs font-bold leading-4 text-white shadow">75</div>

<!-- red pen marks -->
<svg class="pointer-events-none absolute left-0 top-0 h-[768px] w-[700px]" viewBox="0 0 700 768" fill="none" stroke="#f00" stroke-width="3">
  <ellipse cx="369" cy="361.500" rx="222.500" ry="39"/>
  <ellipse cx="357.500" cy="504.500" rx="218.500" ry="48.500"/>
  <path d="M507 397L481 444"/>
  <path d="M476 453l-1-11 3-2 6 4z" fill="#f00" stroke-width="1"/>
</svg>
</body>
</html>
